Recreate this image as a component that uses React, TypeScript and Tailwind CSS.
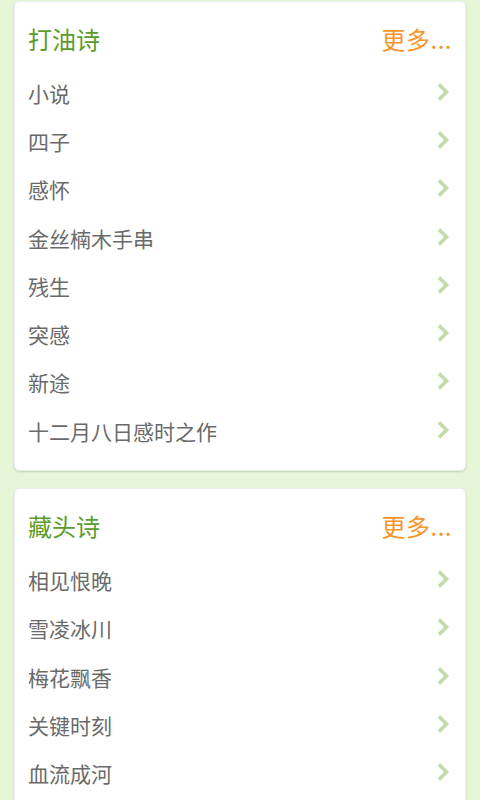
const cards = [
  {
    title: "打油诗",
    items: ["小说", "四子", "感怀", "金丝楠木手串", "残生", "突感", "新途", "十二月八日感时之作"],
  },
  {
    title: "藏头诗",
    items: ["相见恨晚", "雪凌冰川", "梅花飘香", "关键时刻", "血流成河"],
  },
];

function Chevron() {
  return (
    <svg width="14" height="20" viewBox="0 0 14 20" className="shrink-0 mr-[2px] -mt-[3px]">
      <path d="M3 2.5 L10.5 10 L3 17.5" fill="none" stroke="#c4dba6" strokeWidth="3.6" />
    </svg>
  );
}

export default function App() {
  return (
    <div className="w-[480px] h-[800px] overflow-hidden bg-[#e5f7d6] px-[14px] pt-px flex flex-col gap-[17px] font-['Noto_Sans_CJK_SC',sans-serif]">
      {cards.map((card) => (
        <section
          key={card.title}
          className="bg-white rounded-[5px] border border-[#ececec] shadow-[0_1px_2px_rgba(0,0,0,0.15)] pl-[13px] pr-[13px] pt-[7px] pb-[15px] shrink-0"
        >
          <div className="h-[60px] flex items-center justify-between">
            <h2 className="text-[24px] leading-none text-[#5c9c2c]">{card.title}</h2>
            <span className="text-[24px] leading-none text-[#f7952a] tracking-[0.5px]">更多...</span>
          </div>
          {card.items.map((item) => (
            <div key={item} className="h-[48.3px] flex items-center justify-between">
              <span className="text-[21px] leading-none text-[#6a6a6a]">{item}</span>
              <Chevron />
            </div>
          ))}
        </section>
      ))}
    </div>
  );
}
